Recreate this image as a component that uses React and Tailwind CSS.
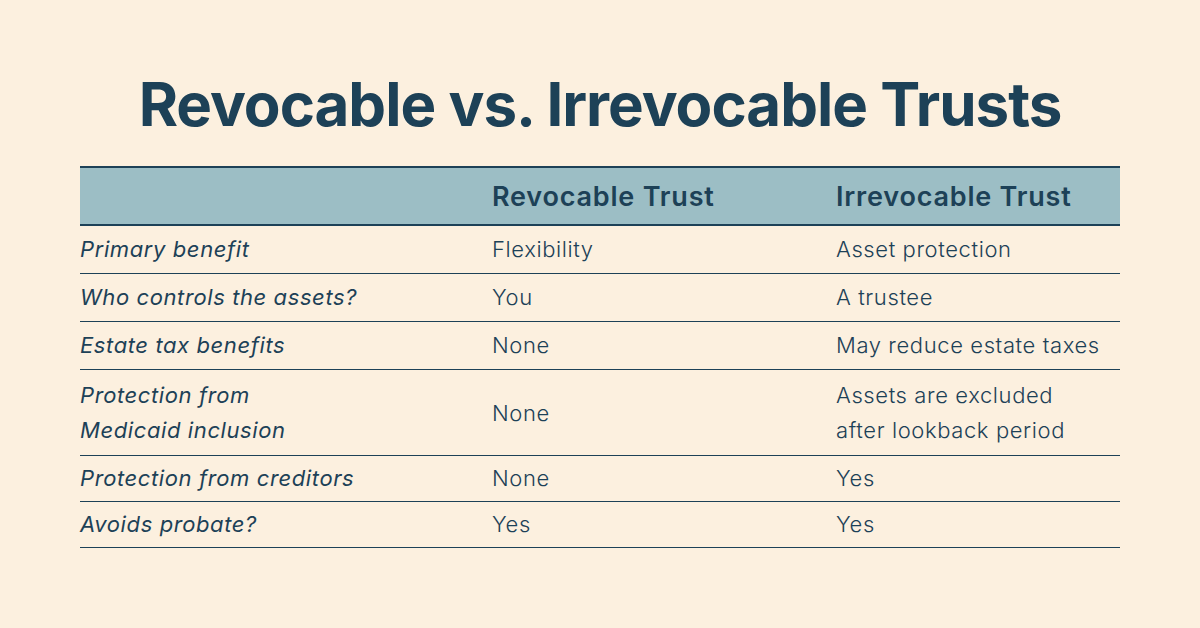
const ROWS = [
  { label: ['Primary benefit'], rev: 'Flexibility', irr: ['Asset protection'], pad: 'py-[6px]' },
  { label: ['Who controls the assets?'], rev: 'You', irr: ['A trustee'], pad: 'py-[6px]' },
  { label: ['Estate tax benefits'], rev: 'None', irr: ['May reduce estate taxes'], pad: 'py-[6px]' },
  {
    label: ['Protection from', 'Medicaid inclusion'],
    rev: 'None',
    irr: ['Assets are excluded', 'after lookback period'],
    pad: 'pt-[8px] pb-[7px]',
  },
  { label: ['Protection from creditors'], rev: 'None', irr: ['Yes'], pad: 'py-[5px]' },
  { label: ['Avoids probate?'], rev: 'Yes', irr: ['Yes'], pad: 'py-[5px]' },
];

function Lines({ lines }) {
  return lines.map((l) => (
    <div key={l} className="leading-[35px]">
      {l}
    </div>
  ));
}

export default function App() {
  return (
    <div className="w-[1200px] h-[628px] bg-[#fcf0df] text-[#1d4157] font-['Inter',sans-serif] flex flex-col items-center overflow-hidden">
      <h1 className="mt-[66px] text-[60px] leading-[76px] font-bold tracking-[-1px]">
        Revocable vs. Irrevocable Trusts
      </h1>

      <div className="mt-[24px] w-[1040px] border-t-2 border-[#1d4157]">
        <div className="grid grid-cols-[412px_344px_1fr] h-[58px] items-center bg-[#9cbec5] border-b-2 border-[#1d4157] text-[27px] tracking-[0.8px] font-semibold">
          <div />
          <div className="pt-[2px]">Revocable Trust</div>
          <div className="pt-[2px]">Irrevocable Trust</div>
        </div>
        {ROWS.map((r) => (
          <div
            key={r.rev + r.label[0]}
            className={`grid grid-cols-[412px_344px_1fr] items-center border-b border-[#1d4157] text-[22px] tracking-[0.6px] ${r.pad}`}
          >
            <div className="italic font-normal">
              <Lines lines={r.label} />
            </div>
            <div className="font-light">{r.rev}</div>
            <div className="font-light">
              <Lines lines={r.irr} />
            </div>
          </div>
        ))}
      </div>
    </div>
  );
}
